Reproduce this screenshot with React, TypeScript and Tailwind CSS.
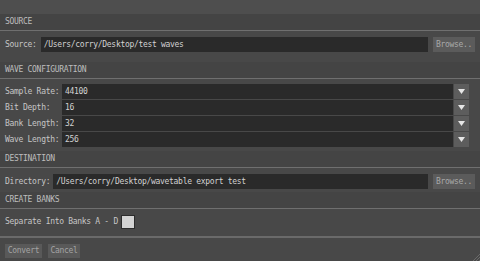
import React from 'react';

const SectionHeader = ({ title }: { title: string }) => (
  <div className="h-[17px] shrink-0 flex items-center px-[5px] bg-[#444444] border-b border-[#6f6f6f] text-[#bdbdbd]">
    {title}
  </div>
);

const TextBox = ({ value }: { value: string }) => (
  <div className="flex-1 h-[15px] flex items-center pl-[3px] bg-[#2a2a2a] text-[#d2d2d2] whitespace-nowrap overflow-hidden">
    {value}
  </div>
);

const BrowseButton = () => (
  <div className="w-[42px] h-[15px] shrink-0 flex items-center justify-center bg-[#5b5b5b] text-[#a9a9a9]">
    Browse..
  </div>
);

const DropRow = ({ label, value }: { label: string; value: string }) => (
  <div className="flex items-center h-[15px]">
    <span className="w-[57px] shrink-0">{label}</span>
    <TextBox value={value} />
    <div className="ml-[1px] w-[15px] h-[15px] shrink-0 flex items-center justify-center bg-[#5d5d5d]">
      <svg width="7" height="5" viewBox="0 0 7 5">
        <path d="M0 0 H7 L3.5 5 Z" fill="#e6e6e6" />
      </svg>
    </div>
  </div>
);

const waveRows = [
  { label: 'Sample Rate:', value: '44100' },
  { label: 'Bit Depth:', value: '16' },
  { label: 'Bank Length:', value: '32' },
  { label: 'Wave Length:', value: '256' },
];

export default function App() {
  return (
    <div className="relative w-[480px] h-[261px] overflow-hidden flex flex-col bg-[#484848] text-[#c6c6c6] text-[8px] tracking-[-0.3px] leading-none font-['DejaVu_Sans_Mono',monospace]">
      <div className="h-[14px] shrink-0 bg-[#4e4e4e]" />

      <SectionHeader title="SOURCE" />
      <div className="flex items-center pl-[5px] pr-[5px] pt-[6px] pb-[10px]">
        <span className="mr-[4px] shrink-0">Source:</span>
        <TextBox value="/Users/corry/Desktop/test waves" />
        <div className="ml-[5px]">
          <BrowseButton />
        </div>
      </div>

      <SectionHeader title="WAVE CONFIGURATION" />
      <div className="flex flex-col gap-[1px] pl-[5px] pr-[11px] pt-[5px] pb-[4px]">
        {waveRows.map((row) => (
          <DropRow key={row.label} label={row.label} value={row.value} />
        ))}
      </div>

      <SectionHeader title="DESTINATION" />
      <div className="flex items-center pl-[5px] pr-[5px] pt-[6px] pb-[3px]">
        <span className="mr-[3px] shrink-0">Directory:</span>
        <TextBox value="/Users/corry/Desktop/wavetable export test" />
        <div className="ml-[5px]">
          <BrowseButton />
        </div>
      </div>

      <SectionHeader title="CREATE BANKS" />
      <div className="flex items-center pl-[5px] pt-[6px] pb-[7px] border-b-2 border-[#6a6a6a]">
        <span>Separate Into Banks A - D</span>
        <div className="ml-[3px] w-[14px] h-[14px] bg-[#d3d3d3] border border-[#2c2c2c]" />
      </div>

      <div className="flex items-start gap-[6px] pl-[5px] pt-[6px]">
        <div className="w-[37px] h-[14px] flex items-center justify-center bg-[#595959] text-[#a4a4a4]">
          Convert
        </div>
        <div className="w-[32px] h-[14px] flex items-center justify-center bg-[#595959] text-[#a4a4a4]">
          Cancel
        </div>
      </div>

      <svg className="absolute right-0 bottom-0" width="8" height="8" viewBox="0 0 8 8">
        <path d="M8 1 L1 8 M8 4 L4 8 M8 7 L7 8" stroke="#6a6a6a" strokeWidth="1" />
      </svg>
    </div>
  );
}
